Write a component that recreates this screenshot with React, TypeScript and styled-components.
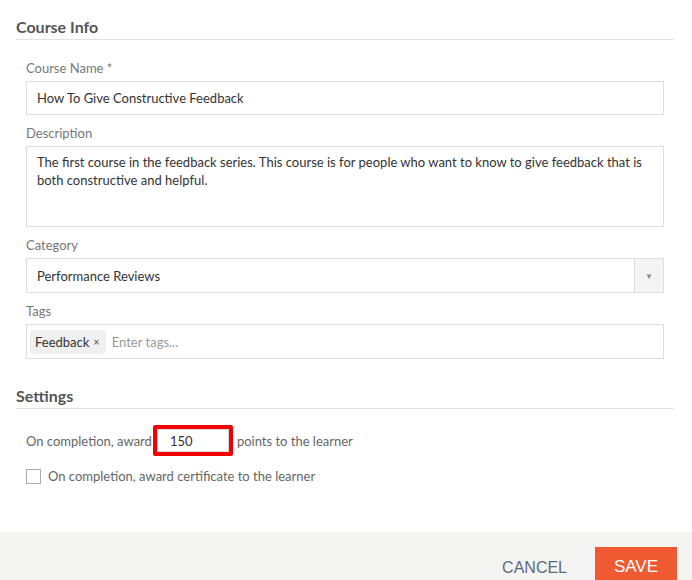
import React from "react";
import styled, { createGlobalStyle } from "styled-components";

const GlobalStyle = createGlobalStyle`
  html, body {
    margin: 0;
    padding: 0;
    background: #fff;
  }
  body {
    font-family: Lato, "Open Sans", sans-serif;
    color: #333;
  }
`;

const Page = styled.div`
  width: 692px;
  height: 580px;
  display: flex;
  flex-direction: column;
  overflow: hidden;
`;

const Body = styled.div`
  flex: 1;
  padding: 17px 18px 0 16px;
`;

const SectionTitle = styled.h2`
  margin: 0;
  padding-bottom: 2px;
  border-bottom: 1px solid #e2e2e2;
  font-size: 16px;
  font-weight: 700;
  color: #555;
  line-height: 20px;
`;

const Fields = styled.div`
  padding: 20px 10px 0 10px;
  display: flex;
  flex-direction: column;
`;

const Label = styled.label`
  display: block;
  font-size: 13px;
  color: #777;
  line-height: 16px;
  margin-bottom: 5px;
`;

const Group = styled.div`
  margin-bottom: 10px;
`;

const TextBox = styled.div<{ $tall?: boolean }>`
  border: 1px solid #dedede;
  background: #fff;
  height: ${(p) => (p.$tall ? "81px" : "34px")};
  box-sizing: border-box;
  padding: ${(p) => (p.$tall ? "6px 10px" : "0 10px")};
  display: flex;
  align-items: ${(p) => (p.$tall ? "flex-start" : "center")};
  font-size: 13px;
  line-height: 18px;
  color: #333;
`;

const Select = styled.div`
  border: 1px solid #dedede;
  height: 35px;
  box-sizing: border-box;
  display: flex;
  font-size: 13px;
  color: #333;
`;

const SelectValue = styled.div`
  flex: 1;
  display: flex;
  align-items: center;
  padding: 0 10px;
`;

const SelectArrow = styled.div`
  width: 28px;
  border-left: 1px solid #dedede;
  background: #f4f4f4;
  display: flex;
  align-items: center;
  justify-content: center;
  color: #888;
  font-size: 8px;
`;

const TagBox = styled.div`
  border: 1px solid #dedede;
  height: 35px;
  box-sizing: border-box;
  padding: 0 3px;
  display: flex;
  align-items: center;
  gap: 6px;
  font-size: 13px;
`;

const Tag = styled.span`
  background: #f0f0f0;
  border-radius: 4px;
  padding: 4px 6px 4px 5px;
  color: #333;
  display: inline-flex;
  align-items: center;
  gap: 4px;
  line-height: 16px;
`;

const TagRemove = styled.span`
  font-size: 11px;
  color: #555;
`;

const Placeholder = styled.span`
  color: #999;
`;

const SettingsBody = styled.div`
  padding: 16px 10px 0 10px;
  font-size: 13px;
  color: #666;
`;

const AwardRow = styled.div`
  display: flex;
  align-items: center;
`;

const PointsFrame = styled.div`
  border: 4px solid #f00000;
  border-radius: 2px;
  margin: 0 4px 0 1px;
`;

const PointsInput = styled.div`
  width: 72px;
  height: 23px;
  box-sizing: border-box;
  border: 1px solid #dcdcdc;
  padding-left: 12px;
  display: flex;
  align-items: center;
  font-size: 13px;
  color: #333;
`;

const CheckRow = styled.div`
  display: flex;
  align-items: center;
  gap: 7px;
  margin-top: 12px;
`;

const Check = styled.span`
  width: 15px;
  height: 15px;
  box-sizing: border-box;
  border: 1px solid #aaa;
  background: #fff;
`;

const SecondTitle = styled(SectionTitle)`
  margin-top: 17px;
`;

const Footer = styled.div`
  height: 48px;
  background: #f4f4f2;
  display: flex;
  align-items: flex-start;
  justify-content: flex-end;
  padding: 15px 15px 0 0;
  box-sizing: border-box;
  gap: 28px;
`;

const CancelButton = styled.button`
  border: none;
  background: none;
  font-family: "Liberation Sans", Arial, sans-serif;
  font-size: 16px;
  color: #5b6b7b;
  padding: 0;
  margin-top: 11px;
  height: 20px;
  cursor: pointer;
`;

const SaveButton = styled.button`
  border: none;
  background: #f05a33;
  color: #fff;
  font-family: "Liberation Sans", Arial, sans-serif;
  font-size: 17px;
  width: 82px;
  height: 40px;
  padding: 0;
  cursor: pointer;
`;

export default function App() {
  return (
    <>
      <GlobalStyle />
      <Page>
        <Body>
          <SectionTitle>Course Info</SectionTitle>
          <Fields>
            <Group>
              <Label>Course Name *</Label>
              <TextBox>How To Give Constructive Feedback</TextBox>
            </Group>
            <Group>
              <Label>Description</Label>
              <TextBox $tall>
                The first course in the feedback series. This course is for people who want to know to
                give feedback that is both constructive and helpful.
              </TextBox>
            </Group>
            <Group>
              <Label>Category</Label>
              <Select>
                <SelectValue>Performance Reviews</SelectValue>
                <SelectArrow>▼</SelectArrow>
              </Select>
            </Group>
            <Group>
              <Label>Tags</Label>
              <TagBox>
                <Tag>
                  Feedback <TagRemove>×</TagRemove>
                </Tag>
                <Placeholder>Enter tags...</Placeholder>
              </TagBox>
            </Group>
          </Fields>
          <SecondTitle>Settings</SecondTitle>
          <SettingsBody>
            <AwardRow>
              <span>On completion, award</span>
              <PointsFrame>
                <PointsInput>150</PointsInput>
              </PointsFrame>
              <span>points to the learner</span>
            </AwardRow>
            <CheckRow>
              <Check />
              <span>On completion, award certificate to the learner</span>
            </CheckRow>
          </SettingsBody>
        </Body>
        <Footer>
          <CancelButton>CANCEL</CancelButton>
          <SaveButton>SAVE</SaveButton>
        </Footer>
      </Page>
    </>
  );
}
